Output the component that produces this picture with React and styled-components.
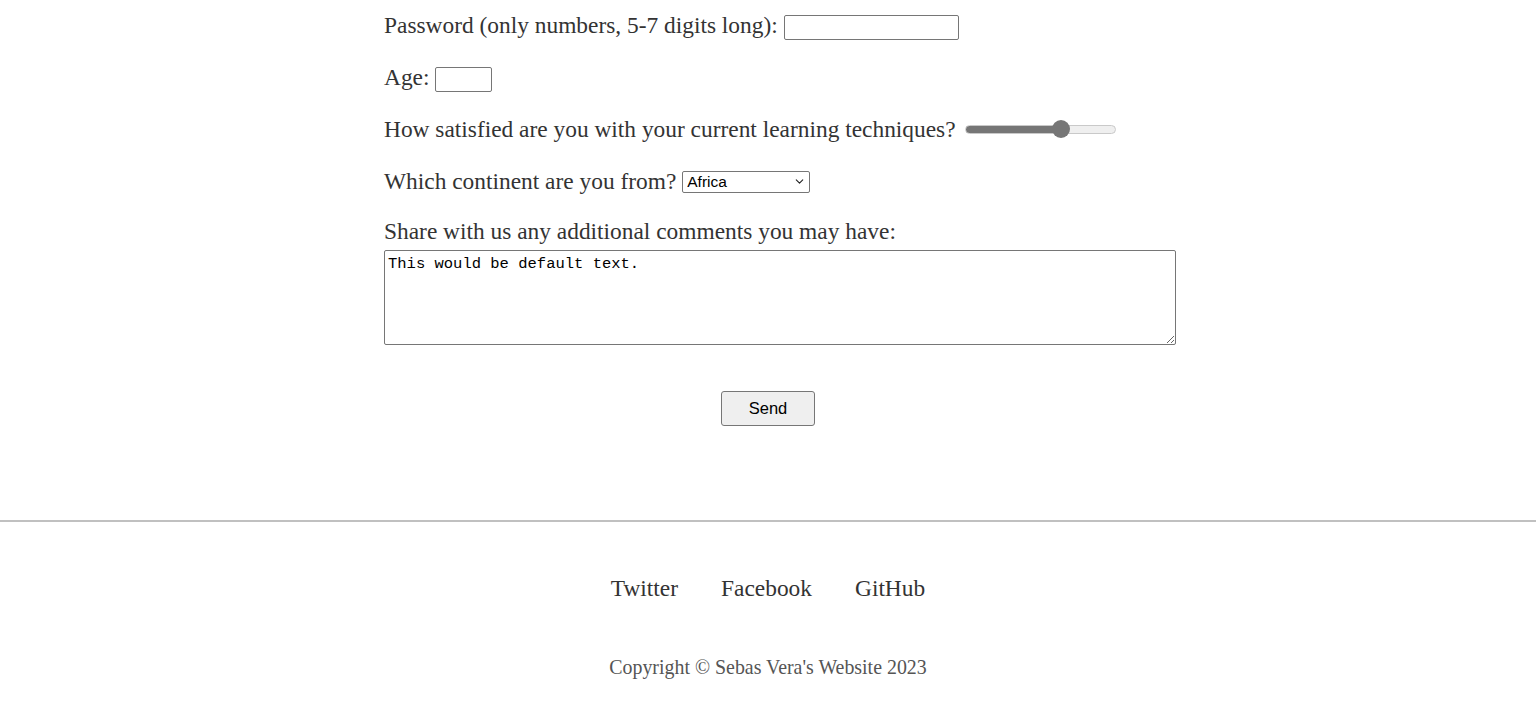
import styled, { createGlobalStyle } from "styled-components";
import { ChevronDown } from "lucide-react";

const GlobalStyle = createGlobalStyle`
  body {
    margin: 0;
    background: #fff;
    font-family: "Liberation Serif", "Times New Roman", serif;
    color: #333;
  }
`;

const Form = styled.form`
  width: 768px;
  margin: 0 auto;
  padding-top: 10px;
`;

const Row = styled.div`
  display: flex;
  align-items: center;
  gap: 6px;
  min-height: 30px;
  margin-bottom: 22px;
  font-size: 23.4px;
`;

const Label = styled.label`
  white-space: nowrap;
`;

const TextInput = styled.input`
  box-sizing: border-box;
  width: ${(p) => p.$w}px;
  height: 25px;
  border: 1px solid #767676;
  border-radius: 2px;
  margin: 5px 0 0;
`;

const Range = styled.input`
  appearance: none;
  -webkit-appearance: none;
  box-sizing: border-box;
  width: 151px;
  height: 9px;
  margin: 0 0 0 3px;
  border-radius: 5px;
  border: 1px solid #c9c9c9;
  background: linear-gradient(
    to right,
    #767676 0%,
    #767676 ${(p) => p.$fill}%,
    #efefef ${(p) => p.$fill}%,
    #efefef 100%
  );

  &::-webkit-slider-thumb {
    -webkit-appearance: none;
    width: 18px;
    height: 18px;
    border-radius: 50%;
    background: #767676;
    border: none;
  }
`;

const SelectWrap = styled.span`
  position: relative;
  display: inline-flex;
  align-items: center;
  margin-top: 1px;
`;

const Select = styled.select`
  appearance: none;
  -webkit-appearance: none;
  box-sizing: border-box;
  width: 128px;
  height: 22px;
  padding: 0 20px 0 4px;
  border: 1px solid #767676;
  border-radius: 2px;
  background: #fff;
  color: #000;
  font-family: "Liberation Sans", Arial, sans-serif;
  font-size: 15.5px;
`;

const Chevron = styled(ChevronDown)`
  position: absolute;
  right: 4px;
  pointer-events: none;
  color: #222;
`;

const CommentLabel = styled.label`
  display: block;
  font-size: 23.4px;
  line-height: 26px;
  margin-bottom: 6px;
`;

const TextArea = styled.textarea`
  display: block;
  box-sizing: border-box;
  width: 792px;
  height: 95px;
  margin: 0;
  padding: 4px 3px 2px;
  border: 1px solid #767676;
  border-radius: 2px;
  font-family: "Liberation Mono", "Courier New", monospace;
  font-size: 15.5px;
  color: #000;
  resize: both;
`;

const Actions = styled.div`
  display: flex;
  justify-content: center;
  padding-top: 46px;
`;

const Button = styled.button`
  width: 94px;
  height: 35px;
  background: #efefef;
  border: 1px solid #767676;
  border-radius: 3px;
  font-family: "Liberation Sans", Arial, sans-serif;
  font-size: 16.5px;
  color: #000;
`;

const Footer = styled.footer`
  margin-top: 94px;
  border-top: 2px solid #c0c0c0;
  padding-top: 53px;
  text-align: center;
`;

const Links = styled.nav`
  display: flex;
  justify-content: center;
  gap: 43px;
  font-size: 23.4px;
`;

const Link = styled.a`
  color: #333;
  text-decoration: none;
`;

const Copyright = styled.p`
  margin: 54px 0 0;
  font-size: 19.9px;
  color: #555;
`;

export default function App() {
  return (
    <>
      <GlobalStyle />
      <Form onSubmit={(e) => e.preventDefault()}>
        <Row>
          <Label htmlFor="pass">Password (only numbers, 5-7 digits long):</Label>
          <TextInput id="pass" type="password" $w={175} />
        </Row>
        <Row>
          <Label htmlFor="age">Age:</Label>
          <TextInput id="age" type="number" $w={57} />
        </Row>
        <Row>
          <Label htmlFor="sat">How satisfied are you with your current learning techniques?</Label>
          <Range id="sat" type="range" min="0" max="100" defaultValue="66" $fill={66} />
        </Row>
        <Row>
          <Label htmlFor="cont">Which continent are you from?</Label>
          <SelectWrap>
            <Select id="cont" defaultValue="africa">
              <option value="africa">Africa</option>
              <option value="america">America</option>
              <option value="asia">Asia</option>
              <option value="europe">Europe</option>
              <option value="oceania">Oceania</option>
            </Select>
            <Chevron size={13} strokeWidth={2} />
          </SelectWrap>
        </Row>
        <CommentLabel htmlFor="comments">Share with us any additional comments you may have:</CommentLabel>
        <TextArea id="comments" defaultValue="This would be default text." />
        <Actions>
          <Button type="submit">Send</Button>
        </Actions>
      </Form>
      <Footer>
        <Links>
          <Link href="#">Twitter</Link>
          <Link href="#">Facebook</Link>
          <Link href="#">GitHub</Link>
        </Links>
        <Copyright>Copyright © Sebas Vera's Website 2023</Copyright>
      </Footer>
    </>
  );
}
